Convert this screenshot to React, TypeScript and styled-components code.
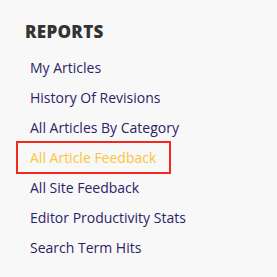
import React from "react";
import styled, { createGlobalStyle } from "styled-components";

const Global = createGlobalStyle`
  html, body { margin: 0; padding: 0; background: #f8f8f8; }
  body { font-family: "Open Sans", "Noto Sans", sans-serif; }
`;

const Panel = styled.nav`
  padding: 21px 0 0 25px;
  height: 277px;
  box-sizing: border-box;
`;

const Heading = styled.h2`
  margin: 0 0 9px 0;
  font-size: 17px;
  line-height: 22px;
  font-weight: 800;
  color: #333333;
  letter-spacing: 0.3px;
`;

const List = styled.ul`
  list-style: none;
  margin: 0;
  padding: 0 0 0 5px;
`;

const Item = styled.li`
  height: 30px;
  display: flex;
  align-items: center;
`;

const Link = styled.a<{ $active?: boolean }>`
  display: inline-block;
  font-size: 14px;
  line-height: 27px;
  padding: 1px 13px 1px 12px;
  margin-left: -12px;
  text-decoration: none;
  color: ${(p) => (p.$active ? "#fbc53c" : "#2b2366")};
  outline: ${(p) => (p.$active ? "2px solid #f4271d" : "none")};
`;

const items = [
  "My Articles",
  "History Of Revisions",
  "All Articles By Category",
  "All Article Feedback",
  "All Site Feedback",
  "Editor Productivity Stats",
  "Search Term Hits",
];

export default function App() {
  return (
    <>
      <Global />
      <Panel>
        <Heading>REPORTS</Heading>
        <List>
          {items.map((t, i) => (
            <Item key={t}>
              <Link href="#" $active={i === 3}>
                {t}
              </Link>
            </Item>
          ))}
        </List>
      </Panel>
    </>
  );
}
